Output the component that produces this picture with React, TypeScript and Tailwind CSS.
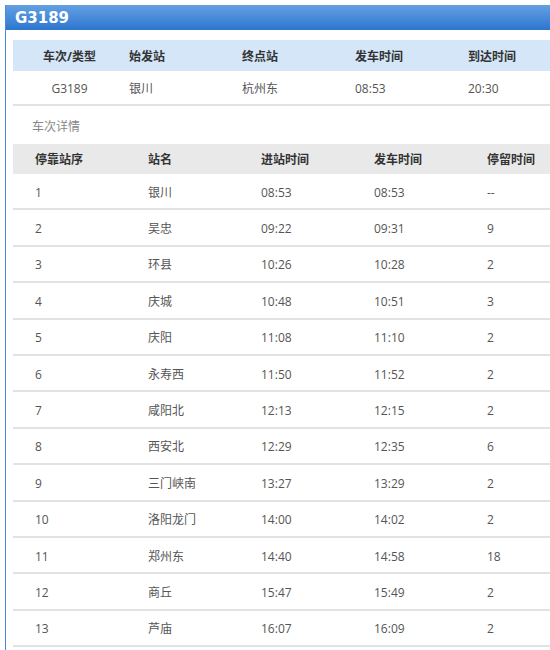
const stops = [
  ["1", "银川", "08:53", "08:53", "--"],
  ["2", "吴忠", "09:22", "09:31", "9"],
  ["3", "环县", "10:26", "10:28", "2"],
  ["4", "庆城", "10:48", "10:51", "3"],
  ["5", "庆阳", "11:08", "11:10", "2"],
  ["6", "永寿西", "11:50", "11:52", "2"],
  ["7", "咸阳北", "12:13", "12:15", "2"],
  ["8", "西安北", "12:29", "12:35", "6"],
  ["9", "三门峡南", "13:27", "13:29", "2"],
  ["10", "洛阳龙门", "14:00", "14:02", "2"],
  ["11", "郑州东", "14:40", "14:58", "18"],
  ["12", "商丘", "15:47", "15:49", "2"],
  ["13", "芦庙", "16:07", "16:09", "2"],
];

const font = { fontFamily: '"Open Sans", "Noto Sans CJK SC", sans-serif' };

export default function App() {
  return (
    <div className="w-[550px] h-[650px] overflow-hidden bg-white" style={font}>
      <div className="mt-[5px] ml-[5px] w-[600px] border-l border-[#4a8ad8] pb-10">
        <div
          className="h-[25px] pl-[9px] pt-[1px] flex items-center text-white text-[15px] font-bold bg-gradient-to-b from-[#64a0e2] to-[#2b76cf]"
          style={{ fontFamily: '"DejaVu Sans", sans-serif' }}
        >
          G3189
        </div>

        <div className="ml-[7px] mt-[10px]">
          <div className="grid grid-cols-[113px_113px_113px_113px_113px_1fr] h-[31px] pt-[2px] items-center bg-[#d4e6f8] text-[12px] font-bold text-[#333]">
            <div className="text-center">车次/类型</div>
            <div className="pl-[3px]">始发站</div>
            <div className="pl-[3px]">终点站</div>
            <div className="pl-[3px]">发车时间</div>
            <div className="pl-[3px]">到达时间</div>
            <div />
          </div>
          <div className="grid grid-cols-[113px_113px_113px_113px_113px_1fr] h-[35px] pt-[2px] items-center border-b-2 border-[#e2e2e2] text-[12px] text-[#555]">
            <div className="text-center">G3189</div>
            <div className="pl-[3px]">银川</div>
            <div className="pl-[3px]">杭州东</div>
            <div className="pl-[3px]">08:53</div>
            <div className="pl-[3px]">20:30</div>
            <div />
          </div>

          <div className="h-[38px] pt-[3px] flex items-center pl-[19px] text-[12px] text-[#888]">车次详情</div>

          <div className="grid grid-cols-[113px_113px_113px_113px_113px_1fr] h-[30px] pt-[2px] items-center bg-[#e9e9e9] text-[12px] font-bold text-[#333]">
            <div className="pl-[22px]">停靠站序</div>
            <div className="pl-[22px]">站名</div>
            <div className="pl-[22px]">进站时间</div>
            <div className="pl-[22px]">发车时间</div>
            <div className="pl-[22px]">停留时间</div>
            <div />
          </div>
          {stops.map((s) => (
            <div
              key={s[0]}
              className="grid grid-cols-[113px_113px_113px_113px_113px_1fr] h-[36.4px] pt-[3px] items-center border-b-2 border-[#e2e2e2] text-[12px] text-[#555]"
            >
              {s.map((c, i) => (
                <div key={i} className="pl-[22px]">
                  {c}
                </div>
              ))}
              <div />
            </div>
          ))}
        </div>
      </div>
    </div>
  );
}
